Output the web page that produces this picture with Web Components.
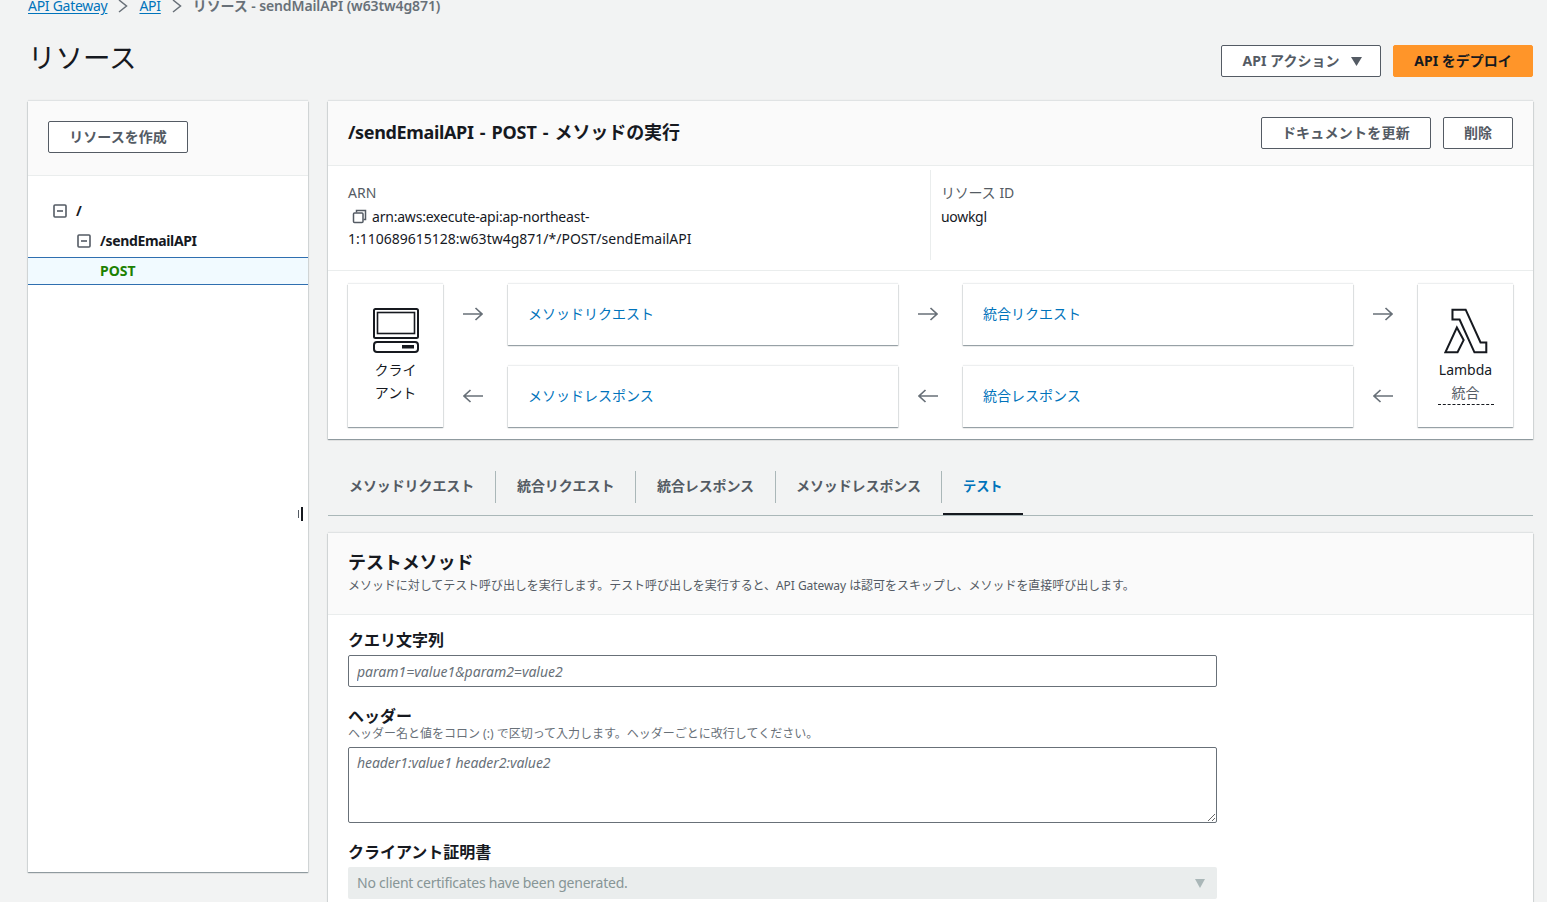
<!DOCTYPE html>
<html lang="ja">
<head>
<meta charset="utf-8">
<title>リソース</title>
<style>
  html, body { margin: 0; height: 902px; overflow: hidden; }
  body {
    background: #f2f3f3;
    color: #16191f;
    font: 14px/20px "Noto Sans", "Noto Sans CJK JP", sans-serif;
  }
</style>
</head>
<body>
<script>
// small helper: every element gets an open shadow root from a template string
function define(name, html) {
  const template = document.createElement("template");
  template.innerHTML = html;
  customElements.define(name, class extends HTMLElement {
    constructor() {
      super();
      this.attachShadow({ mode: "open" });
      this.shadowRoot.appendChild(template.content.cloneNode(true));
    }
  });
}

const CARD_SHADOW = "box-shadow: 0 1px 1px rgba(0,28,36,.3), 1px 1px 1px rgba(0,28,36,.08), -1px 1px 1px rgba(0,28,36,.08), 0 -1px 1px rgba(0,28,36,.07);";

define("aws-button", /* html */ `
  <style>
    :host { display: inline-flex; }
    button {
      all: unset; box-sizing: border-box; height: 32px; width: 100%;
      display: flex; align-items: center; justify-content: center; gap: 13px;
      background: #fff; border: 1px solid #545b64; border-radius: 2px;
      color: #545b64; font: 700 14px/20px "Noto Sans", "Noto Sans CJK JP", sans-serif;
    }
    :host([primary]) button { background: #ff9529; border-color: #ff9529; color: #16191f; }
    :host([menu]) button { gap: 12px; padding-left: 3px; }
  </style>
  <button><slot></slot></button>
`);

define("bread-crumbs", /* html */ `
  <style>
    :host { display: flex; align-items: center; height: 20px; padding-left: 28px; color: #687078; font-weight: 600; letter-spacing: -.1px; }
    ::slotted(a) { color: #0073bb; font-weight: 400; letter-spacing: -.28px; text-decoration: underline; text-underline-offset: 2px; }
  </style>
  <slot></slot>
`);

define("crumb-sep", /* html */ `
  <style>
    :host { display: inline-flex; width: 32px; justify-content: center; }
    svg { width: 10px; height: 14px; fill: none; stroke: #687078; stroke-width: 1.5; }
  </style>
  <svg viewBox="0 0 10 14"><path d="M1 1l7.5 6L1 13"/></svg>
`);

define("page-head", /* html */ `
  <style>
    :host { display: flex; align-items: center; height: 64px; margin: 10px 14px 0 28px; gap: 12px; }
    h1 { flex: 1; margin: 0; font-size: 27.5px; line-height: 36px; font-weight: 400; color: #16191f; }
    .actions { display: flex; gap: 12px; padding-top: 6px; }
  </style>
  <h1><slot name="title"></slot></h1>
  <div class="actions"><slot></slot></div>
`);

define("minus-box", /* html */ `
  <style>
    :host { display: inline-flex; }
    svg { width: 14px; height: 14px; fill: none; stroke: #545b64; stroke-width: 1.6; }
  </style>
  <svg viewBox="0 0 14 14"><rect x="1" y="1" width="12" height="12" rx="1"/><path d="M4 7h6"/></svg>
`);

define("resource-panel", /* html */ `
  <style>
    :host { display: block; height: 771px; background: #fff; ${CARD_SHADOW} }
    .head { box-sizing: border-box; height: 75px; padding: 20px; background: #fafafa; border-bottom: 1px solid #eaeded; }
    .tree { padding-top: 20px; }
    .row { display: flex; align-items: center; gap: 9px; height: 30px; padding-left: 25px; font-weight: 700; letter-spacing: -.35px; }
    .row.sub { padding-left: 49px; }
    .method {
      box-sizing: border-box; height: 28px; display: flex; align-items: center; padding-left: 72px;
      background: #f1faff; border-top: 1px solid #2f6fb0; border-bottom: 1px solid #2f6fb0;
      color: #1d8102; font-weight: 700; margin-top: 1px;
    }
    aws-button { width: 140px; }
  </style>
  <div class="head"><aws-button>リソースを作成</aws-button></div>
  <div class="tree">
    <div class="row"><minus-box></minus-box>/</div>
    <div class="row sub"><minus-box></minus-box>/sendEmailAPI</div>
    <div class="method">POST</div>
  </div>
`);

define("flow-box", /* html */ `
  <style>
    :host {
      display: flex; align-items: center; box-sizing: border-box; padding: 0 0 2px 20px;
      background: #fff; color: #0073bb; ${CARD_SHADOW}
    }
  </style>
  <slot></slot>
`);

define("flow-end", /* html */ `
  <style>
    :host {
      display: flex; flex-direction: column; align-items: center; grid-row: span 2;
      background: #fff; text-align: center; color: #16191f; padding-top: 24px; ${CARD_SHADOW}
    }
    .icon { height: 46px; display: flex; }
    .label { margin-top: 4px; width: 56px; line-height: 23px; }
  </style>
  <div class="icon"><slot name="icon"></slot></div>
  <div class="label"><slot></slot></div>
`);

define("flow-arrow", /* html */ `
  <style>
    :host { display: flex; align-items: center; justify-content: center; padding: 0 6px 1px 0; }
    svg { width: 20px; height: 14px; fill: none; stroke: #687078; stroke-width: 1.7; }
    :host([back]) svg { transform: scaleX(-1); }
  </style>
  <svg viewBox="0 0 20 14"><path d="M0 7h19M12.5 1l6.5 6-6.5 6"/></svg>
`);

define("method-panel", /* html */ `
  <style>
    :host { display: block; background: #fff; ${CARD_SHADOW} }
    .head {
      box-sizing: border-box; height: 65px; display: flex; align-items: center; gap: 12px; padding: 0 20px;
      background: #fafafa; border-bottom: 1px solid #eaeded;
    }
    h2 { flex: 1; margin: 0 0 2px; font-size: 18px; line-height: 24px; font-weight: 700; letter-spacing: -.1px; word-spacing: 1.5px; }
    h2 span { letter-spacing: -.35px; }
    .info { display: grid; grid-template-columns: 602px 1fr; height: 105px; border-bottom: 1px solid #eaeded; box-sizing: border-box; }
    .col { padding: 16px 20px 0; line-height: 22px; }
    .col + .col { border-left: 1px solid #eaeded; padding-left: 10px; margin: 4px 0 10px; padding-top: 12px; letter-spacing: -.3px; }
    .key { color: #545b64; margin-bottom: 2px; }
    .arn { letter-spacing: -.21px; }
    .copy { width: 15px; height: 15px; vertical-align: -2px; margin: 0 5px 0 4px; fill: none; stroke: #545b64; stroke-width: 1.5; }
    .flow {
      display: grid; grid-template-columns: 95px 65px 1fr 65px 1fr 65px 95px; grid-template-rows: 61px 61px;
      row-gap: 21px; padding: 13px 20px 12px;
    }
    flow-end.last { grid-column: 7; grid-row: 1 / span 2; }
    flow-end.first { grid-column: 1; grid-row: 1 / span 2; }
    .dashed { border-bottom: 1px dashed #16191f; color: #545b64; display: block; line-height: 23px; }
    .lambda { display: block; }
  </style>
  <div class="head">
    <h2><span>/sendEmailAPI</span> - POST - メソッドの実行</h2>
    <aws-button style="width:170px;letter-spacing:.25px">ドキュメントを更新</aws-button>
    <aws-button style="width:70px">削除</aws-button>
  </div>
  <div class="info">
    <div class="col">
      <div class="key">ARN</div>
      <svg class="copy" viewBox="0 0 15 15"><path d="M4.5 3.5v-2h9v9h-2"/><rect x="1.5" y="4" width="9.5" height="9.5" rx="1"/></svg><span class="arn">arn:aws:execute-api:ap-northeast-</span><br>1:110689615128:w63tw4g871/*/POST/sendEmailAPI
    </div>
    <div class="col">
      <div class="key" style="word-spacing:1px">リソース ID</div>
      uowkgl
    </div>
  </div>
  <div class="flow">
    <flow-end class="first">
      <svg slot="icon" width="46" height="46" viewBox="0 0 46 46" fill="none" stroke="#16191f" stroke-width="2">
        <rect x="1" y="1" width="44" height="29" rx="1.5"/>
        <rect x="4.5" y="4.5" width="37" height="21" stroke-width="1.6"/>
        <rect x="1" y="34" width="44" height="10" rx="3"/>
        <rect x="29" y="37" width="12" height="3.5" fill="#16191f" stroke="none"/>
      </svg>
      クライ<br>アント
    </flow-end>
    <flow-arrow style="grid-column:2;grid-row:1"></flow-arrow>
    <flow-box style="grid-column:3;grid-row:1">メソッドリクエスト</flow-box>
    <flow-arrow style="grid-column:4;grid-row:1"></flow-arrow>
    <flow-box style="grid-column:5;grid-row:1">統合リクエスト</flow-box>
    <flow-arrow style="grid-column:6;grid-row:1"></flow-arrow>
    <flow-end class="last">
      <svg class="lambda" slot="icon" width="44" height="46" viewBox="314 112 130 136" fill="none" stroke="#16191f" stroke-width="6" stroke-linejoin="miter">
        <path d="M339 117h39l44 97h17v29h-35l-44-97h-21z"/>
        <path d="M318 243l34-73 20 37-18 36z"/>
      </svg>
      Lambda<span class="dashed">統合</span>
    </flow-end>
    <flow-arrow back style="grid-column:2;grid-row:2"></flow-arrow>
    <flow-box style="grid-column:3;grid-row:2">メソッドレスポンス</flow-box>
    <flow-arrow back style="grid-column:4;grid-row:2"></flow-arrow>
    <flow-box style="grid-column:5;grid-row:2">統合レスポンス</flow-box>
    <flow-arrow back style="grid-column:6;grid-row:2"></flow-arrow>
  </div>
`);

define("tab-bar", /* html */ `
  <style>
    :host { display: flex; height: 44px; margin-top: 32px; border-bottom: 1px solid #aab7b8; }
  </style>
  <slot></slot>
`);

define("tab-item", /* html */ `
  <style>
    :host { position: relative; box-sizing: border-box; display: block; height: 32px; padding-left: 21px; line-height: 30px; color: #545b64; font-weight: 700; letter-spacing: -.1px; }
    :host(:not(:last-child)) { border-right: 1px solid #aab7b8; }
    :host([active]) { color: #0073bb; font-size: 13.2px; letter-spacing: 0; }
    :host([active])::after {
      content: ""; position: absolute; left: 1px; right: 0; top: 42px; height: 2px; background: #16191f;
    }
  </style>
  <slot></slot>
`);

define("form-field", /* html */ `
  <style>
    :host { display: block; margin-bottom: 19px; }
    .label { display: block; font-size: 16px; line-height: 20px; font-weight: 700; color: #16191f; margin-bottom: 5px; }
    :host([hint]) .label { margin-bottom: 0; }
    .hint { display: none; font-size: 12px; line-height: 16px; color: #687078; margin-bottom: 5px; }
    :host([hint]) .hint { display: block; }
  </style>
  <span class="label"><slot name="label"></slot></span>
  <span class="hint"><slot name="hint"></slot></span>
  <slot></slot>
`);

define("text-box", /* html */ `
  <style>
    :host { display: block; box-sizing: border-box; height: 32px; width: 869px; background: #fff; border: 1px solid #687078; border-radius: 2px; }
    input {
      all: unset; box-sizing: border-box; display: block; width: 100%; height: 100%; padding: 5px 8px;
      font: italic 14px/20px "Noto Sans", "Noto Sans CJK JP", sans-serif;
    }
    ::placeholder { color: #687078; opacity: 1; }
  </style>
  <input>
`);

define("text-area", /* html */ `
  <style>
    :host { display: block; box-sizing: border-box; height: 76px; width: 869px; background: #fff; border: 1px solid #687078; border-radius: 2px; }
    textarea {
      box-sizing: border-box; display: block; width: 100%; height: 100%; padding: 5px 8px; margin: 0; border: 0; outline: 0;
      background: transparent; resize: vertical; letter-spacing: -.07px;
      font: italic 14px/20px "Noto Sans", "Noto Sans CJK JP", sans-serif;
    }
    ::placeholder { color: #687078; opacity: 1; }
  </style>
  <textarea></textarea>
`);

define("select-box", /* html */ `
  <style>
    :host {
      display: flex; align-items: center; justify-content: space-between; box-sizing: border-box;
      height: 32px; width: 869px; padding: 0 12px 0 9px; background: #eaeded; border-radius: 2px; color: #879596;
      letter-spacing: -.24px;
    }
    svg { width: 10px; height: 9px; fill: #aab7b8; }
  </style>
  <span><slot></slot></span>
  <svg viewBox="0 0 10 9"><path d="M0 0h10L5 9z"/></svg>
`);

define("test-card", /* html */ `
  <style>
    :host { display: block; margin-top: 17px; background: #fff; height: 500px; ${CARD_SHADOW} }
    .head { box-sizing: border-box; height: 82px; padding: 17px 20px 0; background: #fafafa; border-bottom: 1px solid #eaeded; }
    h3 { margin: 0; font-size: 18px; line-height: 24px; font-weight: 700; letter-spacing: -.1px; }
    p { margin: 2px 0 0; font-size: 12px; line-height: 20px; color: #545b64; letter-spacing: -.055px; }
    .body { padding: 15px 20px 0; }
  </style>
  <div class="head">
    <h3>テストメソッド</h3>
    <p>メソッドに対してテスト呼び出しを実行します。テスト呼び出しを実行すると、API Gateway は認可をスキップし、メソッドを直接呼び出します。</p>
  </div>
  <div class="body"><slot></slot></div>
`);

define("sash-handle", /* html */ `
  <style>
    :host { position: absolute; left: 298px; top: 507px; width: 6px; height: 14px; }
    i { position: absolute; background: #16191f; }
    i.short { left: 0; top: 3px; width: 1px; height: 8px; background: #545b64; }
    i.tall { left: 3px; top: 0; width: 2px; height: 14px; }
  </style>
  <i class="short"></i><i class="tall"></i>
`);

define("resource-page", /* html */ `
  <style>
    :host { display: block; margin-top: -4px; }
    .cols { display: grid; grid-template-columns: 280px 1205px; gap: 20px; padding-left: 28px; margin-top: 11px; }
  </style>
  <slot name="crumbs"></slot>
  <slot name="head"></slot>
  <div class="cols">
    <slot name="side"></slot>
    <div><slot></slot></div>
  </div>
`);

document.body.insertAdjacentHTML("beforeend", /* html */ `
  <resource-page>
    <bread-crumbs slot="crumbs">
      <a>API Gateway</a><crumb-sep></crumb-sep><a>API</a><crumb-sep></crumb-sep>リソース - sendMailAPI (w63tw4g871)
    </bread-crumbs>
    <page-head slot="head">
      <span slot="title">リソース</span>
      <aws-button menu style="width:160px">API アクション <svg width="11" height="9" viewBox="0 0 11 9" fill="#545b64"><path d="M0 0h11L5.5 9z"/></svg></aws-button>
      <aws-button primary style="width:140px">API をデプロイ</aws-button>
    </page-head>
    <resource-panel slot="side"></resource-panel>
    <method-panel></method-panel>
    <tab-bar>
      <tab-item style="width:168px">メソッドリクエスト</tab-item>
      <tab-item style="width:140px">統合リクエスト</tab-item>
      <tab-item style="width:140px">統合レスポンス</tab-item>
      <tab-item style="width:166px;padding-left:20px">メソッドレスポンス</tab-item>
      <tab-item active style="width:81px">テスト</tab-item>
    </tab-bar>
    <test-card>
      <form-field>
        <span slot="label">クエリ文字列</span>
        <text-box id="query"></text-box>
      </form-field>
      <form-field hint>
        <span slot="label">ヘッダー</span>
        <span slot="hint">ヘッダー名と値をコロン (:) で区切って入力します。ヘッダーごとに改行してください。</span>
        <text-area id="headers"></text-area>
      </form-field>
      <form-field>
        <span slot="label">クライアント証明書</span>
        <select-box>No client certificates have been generated.</select-box>
      </form-field>
    </test-card>
  </resource-page>
  <sash-handle></sash-handle>
`);

document.getElementById("query").shadowRoot.querySelector("input").placeholder = "param1=value1&param2=value2";
document.getElementById("headers").shadowRoot.querySelector("textarea").placeholder = "header1:value1 header2:value2";
</script>
</body>
</html>
